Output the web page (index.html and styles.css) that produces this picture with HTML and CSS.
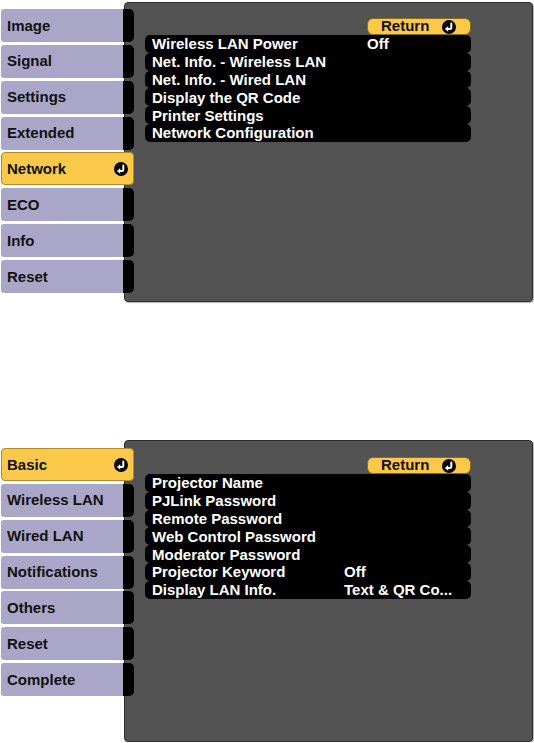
FILE: index.html
```html
<!DOCTYPE html>
<html lang="en">
<head>
<meta charset="utf-8">
<title>Projector Menu</title>
<link rel="stylesheet" href="styles.css">
</head>
<body>
<svg class="defs" width="0" height="0" aria-hidden="true">
  <symbol id="enter" viewBox="0 0 14 14">
    <circle cx="7" cy="7" r="7" fill="#000"/>
    <path d="M9.3 3.4 V7.4 Q9.3 8.9 7.8 8.9 H5.6" fill="none" stroke="#fff" stroke-width="2" stroke-linecap="round"/>
    <path d="M2.9 8.9 L6.2 6 L6.2 11.8 Z" fill="#fff"/>
  </symbol>
</svg>

<section class="menu menu-network">
  <nav class="tabs">
    <div class="tab"><span class="tab-label">Image</span><span class="tab-cap"></span></div>
    <div class="tab"><span class="tab-label">Signal</span><span class="tab-cap"></span></div>
    <div class="tab"><span class="tab-label">Settings</span><span class="tab-cap"></span></div>
    <div class="tab"><span class="tab-label">Extended</span><span class="tab-cap"></span></div>
    <div class="tab tab-active"><span class="tab-label">Network</span><svg class="enter-icon"><use href="#enter"/></svg></div>
    <div class="tab"><span class="tab-label">ECO</span><span class="tab-cap"></span></div>
    <div class="tab"><span class="tab-label">Info</span><span class="tab-cap"></span></div>
    <div class="tab"><span class="tab-label">Reset</span><span class="tab-cap"></span></div>
  </nav>
  <div class="panel">
    <div class="return-row">
      <div class="return-btn"><span class="return-text">Return</span><svg class="enter-icon"><use href="#enter"/></svg></div>
    </div>
    <ul class="rows">
      <li class="row"><span class="row-label">Wireless LAN Power</span><span class="row-value">Off</span></li>
      <li class="row"><span class="row-label">Net. Info. - Wireless LAN</span><span class="row-value"></span></li>
      <li class="row"><span class="row-label">Net. Info. - Wired LAN</span><span class="row-value"></span></li>
      <li class="row"><span class="row-label">Display the QR Code</span><span class="row-value"></span></li>
      <li class="row"><span class="row-label">Printer Settings</span><span class="row-value"></span></li>
      <li class="row"><span class="row-label">Network Configuration</span><span class="row-value"></span></li>
    </ul>
  </div>
</section>

<section class="menu menu-basic">
  <nav class="tabs">
    <div class="tab tab-active"><span class="tab-label">Basic</span><svg class="enter-icon"><use href="#enter"/></svg></div>
    <div class="tab"><span class="tab-label">Wireless LAN</span><span class="tab-cap"></span></div>
    <div class="tab"><span class="tab-label">Wired LAN</span><span class="tab-cap"></span></div>
    <div class="tab"><span class="tab-label">Notifications</span><span class="tab-cap"></span></div>
    <div class="tab"><span class="tab-label">Others</span><span class="tab-cap"></span></div>
    <div class="tab"><span class="tab-label">Reset</span><span class="tab-cap"></span></div>
    <div class="tab"><span class="tab-label">Complete</span><span class="tab-cap"></span></div>
  </nav>
  <div class="panel">
    <div class="return-row">
      <div class="return-btn"><span class="return-text">Return</span><svg class="enter-icon"><use href="#enter"/></svg></div>
    </div>
    <ul class="rows">
      <li class="row"><span class="row-label">Projector Name</span><span class="row-value"></span></li>
      <li class="row"><span class="row-label">PJLink Password</span><span class="row-value"></span></li>
      <li class="row"><span class="row-label">Remote Password</span><span class="row-value"></span></li>
      <li class="row"><span class="row-label">Web Control Password</span><span class="row-value"></span></li>
      <li class="row"><span class="row-label">Moderator Password</span><span class="row-value"></span></li>
      <li class="row"><span class="row-label">Projector Keyword</span><span class="row-value">Off</span></li>
      <li class="row"><span class="row-label">Display LAN Info.</span><span class="row-value">Text &amp; QR Co...</span></li>
    </ul>
  </div>
</section>
</body>
</html>
```
FILE: styles.css
```css
* { box-sizing: border-box; }

html, body {
  margin: 0;
  padding: 0;
  background: #fff;
}

body {
  font-family: "Liberation Sans", Arial, sans-serif;
  font-weight: bold;
  font-size: 15px;
  color: #111;
}

.defs {
  position: absolute;
  width: 0;
  height: 0;
}

.menu {
  display: flex;
  align-items: flex-start;
}

.menu-network {
  margin-top: 2px;
  --tabs-top: 7px;
  --panel-h: 300px;
  --return-top: 15px;
  --label-w: 215px;
}

.menu-basic {
  margin-top: 138px;
  --tabs-top: 8px;
  --panel-h: 302px;
  --return-top: 16px;
  --label-w: 192px;
}

/* left tabs */
.tabs {
  position: relative;
  z-index: 1;
  width: 133px;
  margin-left: 1px;
  margin-top: var(--tabs-top);
  margin-right: -10px;
  display: flex;
  flex-direction: column;
  gap: 2.86px;
}

.tab {
  display: flex;
  height: 33px;
  align-items: stretch;
}

.tab-label {
  flex: 1;
  display: flex;
  align-items: center;
  padding-left: 6px;
  padding-bottom: 1px;
  background: #a9a6c8;
  border-radius: 3px 0 0 3px;
  color: #111;
}

.tab-cap {
  width: 11px;
  background: #000;
  border-radius: 0 5px 5px 0;
}

.tab-active {
  background: #fbc94a;
  border: 1px solid #b38a2c;
  border-radius: 4px;
  align-items: center;
  padding-right: 5px;
}

.tab-active .tab-label {
  background: transparent;
  padding-left: 5px;
  align-self: stretch;
}

.enter-icon {
  width: 14px;
  height: 14px;
  flex: none;
}

/* right panel */
.panel {
  width: 409px;
  height: var(--panel-h);
  background: #525252;
  border: 1px solid #2e2e2e;
  border-radius: 4px;
  box-shadow: 1px 1px 1px #b4b4b4;
  padding-top: var(--return-top);
  padding-left: 20px;
}

.return-row {
  width: 326px;
  display: flex;
  justify-content: flex-end;
}

.return-btn {
  width: 104px;
  height: 17px;
  display: flex;
  align-items: center;
  gap: 13px;
  padding-left: 13px;
  background: #fbc94a;
  border: 1px solid #8c6a1c;
  border-radius: 6px;
  color: #111;
  line-height: 1;
}

.return-text {
  margin-top: -2px;
}

.rows {
  list-style: none;
  margin: 0;
  padding: 0;
  width: 326px;
}

.row {
  display: grid;
  grid-template-columns: var(--label-w) 1fr;
  align-items: center;
  height: 17.8px;
  padding-left: 7px;
  background: #000;
  border-radius: 5px;
  color: #fff;
  line-height: 1;
  white-space: nowrap;
}
```
